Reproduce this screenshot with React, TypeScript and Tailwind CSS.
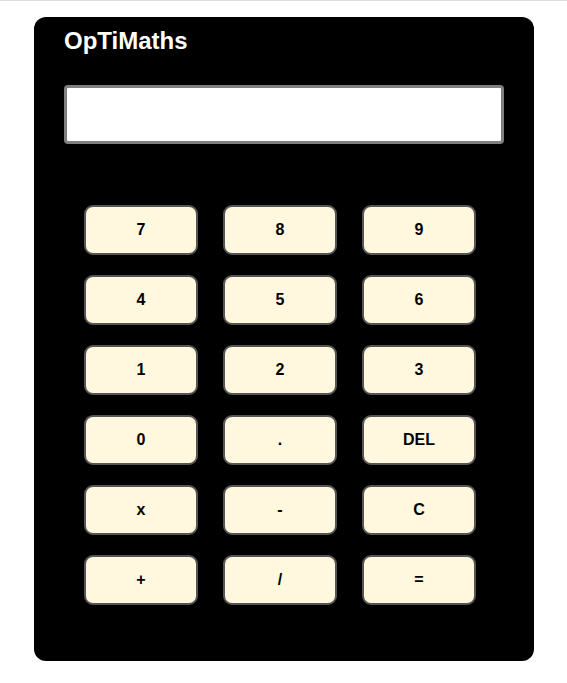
const keys = ["7", "8", "9", "4", "5", "6", "1", "2", "3", "0", ".", "DEL", "x", "-", "C", "+", "/", "="];

export default function App() {
  return (
    <div className="min-h-[683px] border-t border-[#dedede] bg-white font-['Liberation_Sans',Arial,sans-serif]">
      <div className="ml-[34px] mt-[16px] h-[644px] w-[500px] rounded-[12px] bg-black">
        <h1 className="pl-[30px] pt-[10px] text-[24px] font-bold leading-[28px] text-white">OpTiMaths</h1>
        <input
          type="text"
          className="ml-[30px] mt-[30px] block h-[59px] w-[440px] rounded-[4px] border-[3px] border-[#808080] bg-white"
        />
        <div className="ml-[50px] mt-[61px] grid w-[392px] grid-cols-[114px_114px_114px] gap-x-[25px] gap-y-[20px]">
          {keys.map((k) => (
            <button
              key={k}
              className="h-[50px] rounded-[9px] border-2 border-[#555] bg-[#fff7de] text-[16px] font-bold text-black"
            >
              {k}
            </button>
          ))}
        </div>
      </div>
    </div>
  );
}
